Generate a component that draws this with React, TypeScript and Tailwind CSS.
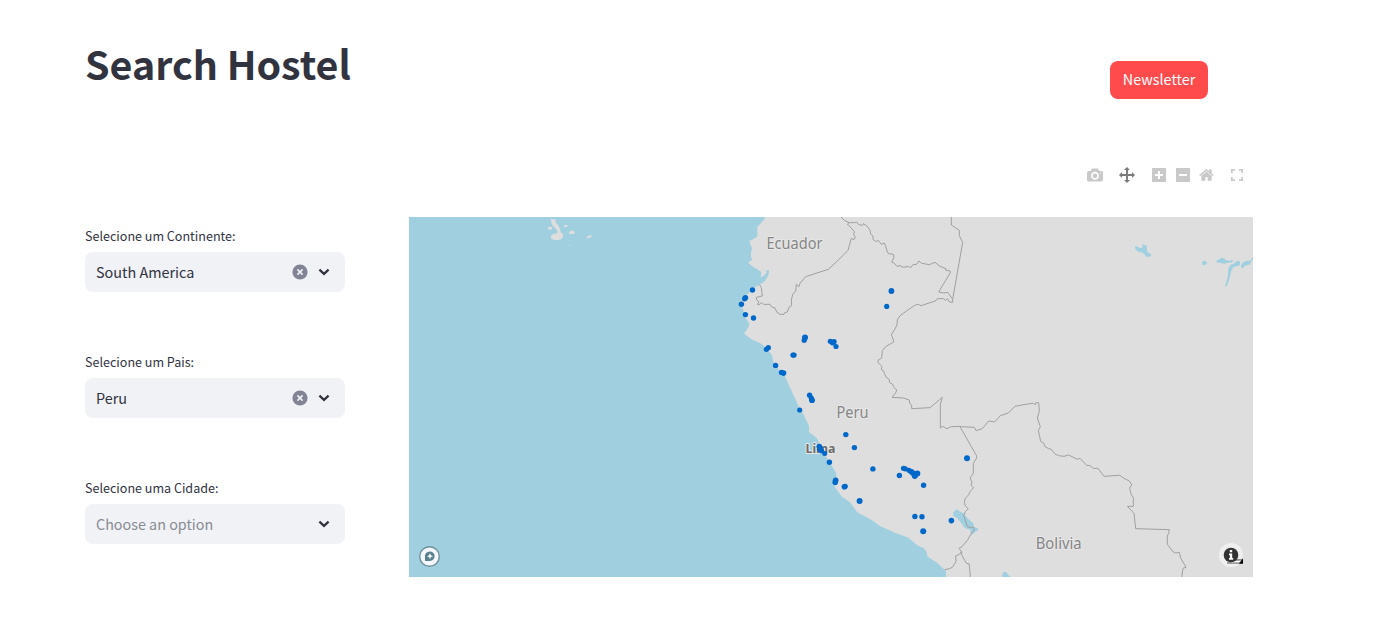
import type { ReactNode } from "react";

const FLIP = "matrix(1 0 0 -1 0 850)";

function BarIcon({ width, d, className }: { width: number; d: string; className: string }) {
  return (
    <svg viewBox={`0 0 ${width} 1000`} className={className} fill="currentColor">
      <path transform={FLIP} d={d} />
    </svg>
  );
}

function ModeBar() {
  return (
    <div className="flex h-4 items-center text-[#c9c9ca]">
      <BarIcon
        width={1000}
        className="size-4"
        d="m500 450c-83 0-150-67-150-150 0-83 67-150 150-150 83 0 150 67 150 150 0 83-67 150-150 150z m400 150h-120c-16 0-34 13-39 29l-31 93c-6 15-23 28-40 28h-340c-16 0-34-13-39-28l-31-94c-6-15-23-28-40-28h-120c-55 0-100-45-100-100v-450c0-55 45-100 100-100h800c55 0 100 45 100 100v450c0 55-45 100-100 100z m-400-550c-138 0-250 112-250 250 0 138 112 250 250 250 138 0 250-112 250-250 0-138-112-250-250-250z m365 380c-19 0-35 16-35 35 0 19 16 35 35 35 19 0 35-16 35-35 0-19-16-35-35-35z"
      />
      <BarIcon
        width={1000}
        className="ml-4 size-4 text-[#7c7c7d]"
        d="m1000 350l-187 188 0-125-250 0 0 250 125 0-188 187-187-187 125 0 0-250-250 0 0 125-188-188 186-187 0 125 252 0 0-250-125 0 187-188 188 188-125 0 0 250 250 0 0-126 187 188z"
      />
      <BarIcon
        width={875}
        className="ml-[17px] h-4 w-3.5"
        d="m1 787l0-875 875 0 0 875-875 0z m687-500l-187 0 0-187-125 0 0 187-188 0 0 125 188 0 0 187 125 0 0-187 187 0 0-125z"
      />
      <BarIcon
        width={875}
        className="ml-2.5 h-4 w-3.5"
        d="m0 788l0-876 875 0 0 876-875 0z m688-500l-500 0 0 125 500 0 0-125z"
      />
      <BarIcon
        width={928.6}
        className="ml-[9px] mr-px h-4 w-[15px]"
        d="m786 296v-267q0-15-11-26t-25-10h-214v214h-143v-214h-214q-15 0-25 10t-11 26v267q0 1 0 2t0 2l321 264 321-264q1-1 1-4z m124 39l-34-41q-5-5-12-6h-2q-7 0-12 3l-386 322-386-322q-7-4-13-4-7 2-12 7l-35 41q-4 5-3 13t6 12l401 334q18 15 42 15t43-15l136-114v109q0 8 5 13t13 5h107q8 0 13-5t5-13v-227l122-102q5-5 6-12t-4-13z"
      />
      <svg viewBox="0 0 12 12" className="ml-4 size-3" fill="none" stroke="currentColor" strokeWidth="1.7">
        <path d="M.85 4V.85H4M8 .85h3.15V4M11.15 8v3.15H8M4 11.15H.85V8" />
      </svg>
    </div>
  );
}

function Field({ label, value, placeholder }: { label: string; value?: string; placeholder?: string }) {
  return (
    <div className="flex h-[126px] flex-col">
      <div className="flex h-[26px] items-start text-[12.55px] leading-[20px]">{label}</div>
      <div className="flex h-10 items-center rounded-lg bg-[#f0f2f6] pl-[11px] pr-[15px]">
        <span className={value ? "grow text-[14.4px] leading-6" : "grow text-[14.35px] leading-6 text-[#898b92]"}>
          {value ?? placeholder}
        </span>
        {value && (
          <svg viewBox="0 0 16 16" className="mr-[10px] size-4">
            <circle cx="8" cy="8" r="7.6" fill="#828496" />
            <path d="m5.4 5.4 5.2 5.2m0-5.2-5.2 5.2" stroke="#f0f2f6" strokeWidth="1.6" />
          </svg>
        )}
        <svg viewBox="0 0 12 12" className="size-3" fill="none">
          <path d="M1.4 3.6 6 7.9l4.6-4.3" stroke="#31333f" strokeWidth="2.2" />
        </svg>
      </div>
    </div>
  );
}

/* Groups of shapes are drawn on a grid of thirds of a pixel. */
function Tile({ x, y, children }: { x: number; y: number; children: ReactNode }) {
  return <g transform={`translate(${x} ${y}) scale(.33333)`}>{children}</g>;
}

const SITES: [number, number, number][] = [
  [752.5, 290, 2.7], [745.4, 297.7, 2.8], [744.5, 299, 2.5], [741.4, 304.3, 2.7], [745.4, 314.6, 2.7],
  [753.5, 318, 2.7], [891.4, 291, 2.9], [886.7, 306.4, 2.6], [805, 337.6, 3], [804.2, 340.3, 2.6],
  [830.3, 341.3, 2.6], [834, 341.8, 2.7], [832.5, 343, 2.5], [836, 346.5, 2.6], [768.3, 347.7, 2.6],
  [766.4, 349.3, 2.6], [793, 355.1, 2.7], [794, 355.1, 2.7], [775.6, 365.4, 2.7], [781.5, 372.4, 2.7],
  [783.5, 373.1, 2.8], [809.6, 395.3, 2.7], [811.3, 398, 2.6], [812, 400.2, 2.9], [799.7, 410, 2.6],
  [845.8, 434.6, 2.7], [854.4, 447.6, 2.7], [819.3, 446.6, 2.8], [820.2, 449, 3.2], [821.3, 450.6, 2.8],
  [824.7, 453.6, 2.5], [829.4, 462.3, 2.7], [835.7, 480.3, 2.8], [835.2, 482.2, 2.8], [844.4, 486.7, 2.8],
  [845.2, 486.3, 2.6], [859.6, 501.1, 3], [872.9, 468.9, 2.7], [899.4, 475.5, 2.7], [903.5, 468.3, 2.6],
  [905.3, 468.8, 2.6], [909, 470.3, 2.6], [911.5, 471.8, 2.9], [913.3, 473.2, 2.8], [914.8, 475.8, 3.1],
  [917.3, 473.6, 3], [923.6, 485.2, 2.7], [914.9, 516.5, 2.7], [922, 516.7, 2.7], [923.2, 531.3, 3],
  [967, 458.2, 3], [951.4, 520.6, 2.8],
];

const LABELS = [
  { text: "Ecuador", x: 766.5, y: 248.5, length: 56, cls: "font-normal text-[16px]", fill: "#858585" },
  { text: "Peru", x: 836.5, y: 417.5, length: 32, cls: "font-normal text-[16px]", fill: "#858585" },
  { text: "Bolivia", x: 1035.7, y: 548.5, length: 46, cls: "font-normal text-[16px]", fill: "#858585" },
  { text: "Lima", x: 805.5, y: 452.7, length: 30, cls: "font-bold text-[12.5px]", fill: "#6c6c6c" },
];

function HostelMap() {
  return (
    <svg viewBox="409 217 844 360" className="block h-[360px] w-[844px] bg-[#dedede]">
      <path
        fill="#a0cfdf"
        d="M409 217H765L763.7 220 757.3 227V236.5L753 239.3 749.3 241 750.3 244.5 752.3 248.5 751 252V257L752.3 259.5 748 262.7 753 266.7 757 269 761.5 272.3 760.5 277 763.5 276 766.5 273 766.3 270.3H769L768.5 275 765 281 760 284.6 752 289 748 294 743 297.3 740 303 743 309 745 317 749.3 323.5 748.5 327 746 331 744 333.3 747 336 752 339.5 758 342 762 344.3 767 349.3 772 355 773.3 362 779 370 785 376.5 799 407.3 803.5 414.5 809 426V432L813 435 816.7 438 820 445 825 455 830 462.7 836 472.7 837 480 834.8 487 838 491.5 842 496.7 850 502.3 857.3 512.3 870 519 880 526 895 532.7 908 537.5 917 545 924 548.6 926.6 552 927.3 556.5 937 562.7 944 569.3 946 571V577H409Z"
      />

      <g fill="#a0cfdf">
        <Tile x={940} y={380}>
          <path d="M40 396L50 388 62 396 70 399 84 416 96 427 101 430V440L114 445 113 452 104 457 96 465 91 458 92 450 73 443 63 428 52 415 40 408zM186 591L189 577 198 575 203 583 211 591z" />
        </Tile>
        <Tile x={940} y={210}>
          <path d="M585 109h6l8 5 8-1 1-11 12 5 1 17 6 6 7 3-3 7h-13l-5-8-9-5-10-2-8-9zM786 155l6-3 8 3v6l-7 5-6-2zM831 151l10-5 3-3 9 2 3 5 14 3 5-4 5 3-4 5-15 2-8 2-13-3-11-1zM855 230L863 200 865 175 872 164 884 160 889 153 900 154 900 164 895 168 880 171 873 185 869 203 861 228zM903 166L910 157 919 153 930 152 939 141V148L932 156 931 163 915 167 909 174 904 173z" />
        </Tile>
      </g>

      <g fill="none" stroke="#a0a0a0" strokeWidth="3" strokeLinejoin="round">
        <Tile x={720} y={210}>
          <path d="M363 21L373 31 388 38 404 38 410 36 416 44 428 46 430 41 440 47 450 60 452 72 459 78 459 88 466 94 476 92 484 103 493 99 497 109 500 120 505 131 520 133 522 142 515 156 523 160 531 169 540 167 550 172 565 169 572 173 579 164 590 163 597 153 605 160 617 162 628 164 645 157 660 169 678 176 676 180 690 183 691 188 656 246 671 249 683 247 698 268" />
          <path d="M388 38L382 42 403 64 401 74 406 81 402 89 394 85 384 121 368 137 350 155 325 178 257 200 240 220 237 230 229 223 227 244 219 251 214 270 215 287 208 290 202 306 194 308 192 313 180 313 170 306 165 294 155 291 150 283 131 283 125 278 117 284 112 283 117 275 110 270 109 262 127 258 124 233 119 224" />
          <path d="M694 21V45L718 61V77L728 97 698 268V277L688 276 682 266 676 271 670 266H652L648 272 640 275 615 283 603 287 596 283 586 285 568 297 540 317 532 330" />
        </Tile>
        <Tile x={720} y={320}>
          <path d="M532 0L531 15 523 30 514 44 522 65 497 80 487 92 485 114 475 120 474 127 486 140 484 149 492 154 493 160 498 171 508 179 509 188 517 192 523 203 530 210 527 219 516 232 550 234 568 240 569 250 575 255V266L630 263 667 232 661 253V324L668 319 681 326 694 320 721 319" />
        </Tile>
        <Tile x={940} y={380}>
          <path d="M60 140L103 142 108 152 127 146 146 123 164 126 181 107 205 99 225 79 256 73 280 70 286 74 288 68 296 68 298 94 292 114 301 140 295 152 299 170 302 184 312 190 314 199 326 206 334 208 345 222 356 227 372 229 386 225 412 238 420 235 440 256 450 257 460 265 474 265 492 289 539 286 552 295 568 303 575 314 569 325 574 345 580 352V379H562L582 400 587 446 688 449 686 460 682 468V493L700 516 707 519 718 517 722 534 738 562 729 565 725 591" />
          <path d="M60 140L110 228V234L100 250V280L90 294 96 306 93 316 101 323 90 335 87 343 76 355 73 367 76 378 85 386 76 395 71 407 82 440 94 443 100 441 103 449 93 462 83 480 66 500 57 505 64 514 61 521 47 528 48 545 37 562 28 566 14 569" />
          <path d="M64 514L66 526 74 541 79 550 87 551 89 565 91 591" />
        </Tile>
      </g>

      <g fill="#dedede">
        <Tile x={530} y={210}>
          <path d="M62 28H76L78 38 85 46 90 56 92 67 99 72V82L94 87 85 90H71L62 84 64 76 70 72 81 70 83 65 76 54 70 49 65 42zM54 51h12v6l-6 3-6-3zM102 45h10v6h-10zM117 67l4-5h10l4 6-4 4h-13zM169 81l15-7 1 5-6 5h-9zM120 105h3v3h-3z" />
        </Tile>
      </g>

      <g stroke="#e8e8e8" strokeWidth="2" strokeLinejoin="round" className="font-['Noto_Sans',sans-serif] [paint-order:stroke]">
        {LABELS.map((l) => (
          <text key={l.text} x={l.x} y={l.y} textLength={l.length} lengthAdjust="spacingAndGlyphs" fill={l.fill} className={l.cls}>
            {l.text}
          </text>
        ))}
      </g>

      <g fill="#0068c9">
        {SITES.map(([x, y, r], i) => (
          <circle key={i} cx={x} cy={y} r={r} />
        ))}
      </g>

      <circle cx="429.5" cy="556.5" r="9.8" fill="#f4f8fa" stroke="#6f929d" strokeWidth="1.4" />
      <path d="M425 561v-4.7a4.8 4.8 0 1 1 4.8 4.7z" fill="#55808c" />
      <path d="M430 553l.9 2.3 2.3.9-2.3.9-.9 2.3-.9-2.3-2.3-.9 2.3-.9z" fill="#fff" />

      <circle cx="1231" cy="555" r="12" fill="#efefef" />
      <path d="M1227 562.2h14v1.6h-14z" fill="#888" />
      <path d="M1231 560.6h9l-1 1.6h-8z" fill="#fff" />
      <path d="M1234 559.2h8v1.4h-8z" fill="#777" />
      <path d="M1239 563.8l4-5.5v5.5z" fill="#000" />
      <circle cx="1231" cy="555" r="7.3" fill="#333" />
      <path d="M1229.8 550h2.4v2.2h-2.4zM1229 553.6h3.2v4.5h1v1.6H1229v-1.6h.9v-2.9h-.9z" fill="#fff" />
    </svg>
  );
}

export default function App() {
  return (
    <main className="flex h-[634px] w-[1381px] flex-col bg-white pl-[85px] pr-32 font-['Noto_Sans_CJK_SC',sans-serif] text-[#31333f]">
      <header className="flex h-[167px] items-start justify-between pr-[45px]">
        <h1 className="pt-9 text-[39.4px] font-bold leading-[53px]">Search Hostel</h1>
        <button className="mt-[61px] h-[38px] w-[98px] rounded-lg bg-[#ff4b4b] pb-0.5 text-[14.4px] leading-6 text-white">
          Newsletter
        </button>
      </header>
      <div className="flex gap-16">
        <aside className="flex w-[260px] flex-col pt-[59px]">
          <Field label="Selecione um Continente:" value="South America" />
          <Field label="Selecione um Pais:" value="Peru" />
          <Field label="Selecione uma Cidade:" placeholder="Choose an option" />
        </aside>
        <section className="flex w-[844px] flex-col">
          <div className="flex h-[50px] items-start justify-end pr-[10px]">
            <ModeBar />
          </div>
          <HostelMap />
        </section>
      </div>
    </main>
  );
}
